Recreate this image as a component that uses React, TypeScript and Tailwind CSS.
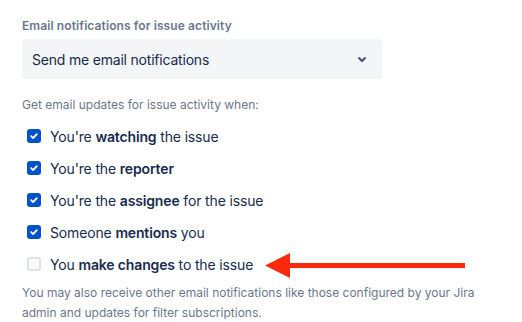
import React from 'react';

const font = { fontFamily: 'Inter, "Noto Sans", sans-serif' };

interface OptionRowProps {
  checked: boolean;
  children: React.ReactNode;
}

const Checkbox: React.FC<{ checked: boolean }> = ({ checked }) =>
  checked ? (
    <span className="flex h-[14px] w-[14px] items-center justify-center rounded-[3px] bg-[#0052cc]">
      <svg width="10" height="10" viewBox="0 0 10 10" fill="none">
        <path d="M2.2 5.2l1.9 1.9L7.8 3.2" stroke="#fff" strokeWidth="1.8" strokeLinecap="round" strokeLinejoin="round" />
      </svg>
    </span>
  ) : (
    <span className="block h-[14px] w-[14px] rounded-[3px] border-2 border-[#dfe1e6] bg-[#fafbfc]" />
  );

const OptionRow: React.FC<OptionRowProps> = ({ checked, children }) => (
  <label className="flex h-8 items-center">
    <span className="ml-[5px] mr-[9px]">
      <Checkbox checked={checked} />
    </span>
    <span className="text-[14px] tracking-[-0.15px] text-[#172b4d]">{children}</span>
  </label>
);

export default function App() {
  return (
    <div className="relative h-[322px] w-[522px] overflow-hidden bg-white pl-[22px] pt-[18px]" style={font}>
      <div className="text-[12px] leading-4 font-semibold tracking-[0.1px] text-[#6b778c]">
        Email notifications for issue activity
      </div>
      <div className="mt-[5px] flex h-10 w-[360px] items-center justify-between rounded-[3px] bg-[#f4f5f7] pl-[10px] pr-2">
        <span className="text-[14px] tracking-[-0.2px] text-[#172b4d]">Send me email notifications</span>
        <svg width="24" height="24" viewBox="0 0 24 24">
          <path
            d="M8.292 10.293a1.009 1.009 0 000 1.419l2.939 2.965c.218.215.5.322.779.322s.556-.107.769-.322l2.93-2.955a1.01 1.01 0 000-1.419.987.987 0 00-1.406 0l-2.298 2.317-2.307-2.327a.99.99 0 00-1.406 0z"
            fill="#42526e"
          />
        </svg>
      </div>

      <div className="mt-[18px] text-[12px] leading-4 text-[#6b778c]">
        Get email updates for issue activity when:
      </div>

      <div className="mt-[7px] flex flex-col">
        <OptionRow checked>
          You're <b className="font-semibold">watching</b> the issue
        </OptionRow>
        <OptionRow checked>
          You're the <b className="font-semibold">reporter</b>
        </OptionRow>
        <OptionRow checked>
          You're the <b className="font-semibold">assignee</b> for the issue
        </OptionRow>
        <OptionRow checked>
          Someone <b className="font-semibold">mentions</b> you
        </OptionRow>
        <OptionRow checked={false}>
          You <b className="font-semibold">make changes</b> to the issue
        </OptionRow>
      </div>

      <p className="mt-[3px] w-[470px] text-[12px] leading-5 text-[#6b778c]">
        You may also receive other email notifications like those configured by your Jira admin and updates for filter
        subscriptions.
      </p>

      <svg className="absolute left-[264px] top-[252px]" width="203" height="26" viewBox="0 0 203 26">
        <path d="M1 13.5L26 1v25z" fill="#fb2a0c" />
        <rect x="24" y="11" width="177" height="5" fill="#fb2a0c" />
      </svg>
    </div>
  );
}
